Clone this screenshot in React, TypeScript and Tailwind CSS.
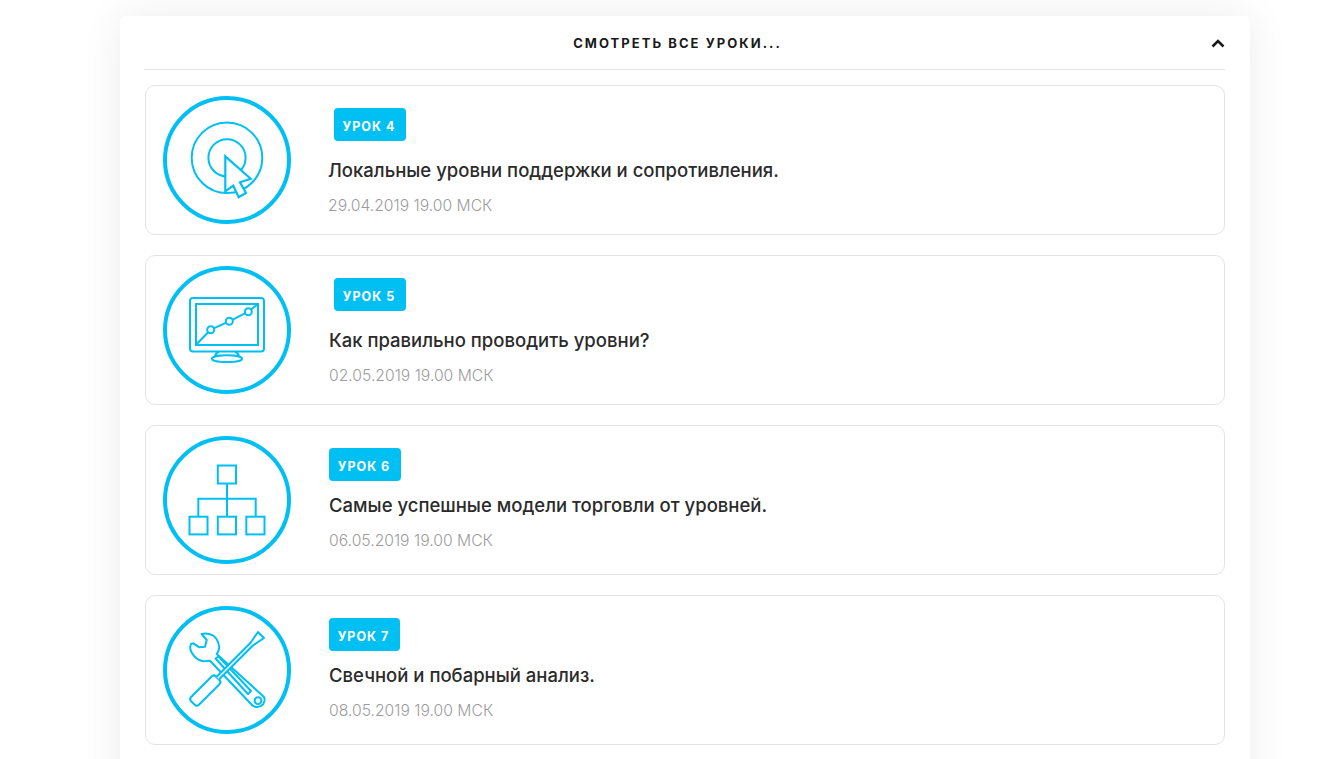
import type { ReactNode } from 'react'

const CY = '#00bff3'

function Ring({ children }: { children: ReactNode }) {
  return (
    <svg width="128" height="128" viewBox="0 0 128 128" fill="none" stroke={CY} strokeWidth="2" className="shrink-0">
      <circle cx="64" cy="64" r="62" strokeWidth="4" />
      {children}
    </svg>
  )
}

function TargetIcon() {
  return (
    <Ring>
      <circle cx="64" cy="61.8" r="35.3" />
      <circle cx="64" cy="61.8" r="18.6" />
      <path d="M62.3 60.3 L87.7 82.7 L77 86.3 L83 97 L75.7 101.3 L70.3 89.7 L62.3 95.3 Z" fill="#fff" strokeWidth="2.2" />
    </Ring>
  )
}

function MonitorIcon() {
  return (
    <Ring>
      <rect x="27" y="32" width="74" height="53.5" rx="3" />
      <rect x="33" y="38" width="62" height="41" />
      <path d="M33.7 78 L47.7 63.7 L66.3 55.3 L85.3 45.7 L95 38" />
      <circle cx="47.7" cy="63.7" r="3.5" fill="#fff" />
      <circle cx="66.3" cy="55.3" r="3.5" fill="#fff" />
      <circle cx="85.3" cy="45.7" r="3.5" fill="#fff" />
      <path d="M52 90 Q53 87 56 85.5 M76 90 Q75 87 72 85.5" />
      <ellipse cx="64" cy="92.7" rx="15" ry="3.4" />
    </Ring>
  )
}

function TreeIcon() {
  return (
    <Ring>
      <rect x="54.8" y="29.5" width="18.2" height="18" />
      <path d="M64 47.5 V80.7 M35.3 80.7 V62.7 H92.7 V80.7" />
      <rect x="26.5" y="80.7" width="18" height="17.7" />
      <rect x="54.8" y="80.7" width="18.2" height="17.7" />
      <rect x="83.3" y="80.7" width="18.2" height="17.7" />
    </Ring>
  )
}

function ToolsIcon() {
  return (
    <Ring>
      <path d="M38.7 28 L43.7 34 L42 40.7 L36.3 41.3 L30.3 37.3 L28 38 Q26 43 29 47 Q33 54 40.3 55.3 L47 54.7 L89.7 99.7 Q95 103 100 98.5 Q103 93 100.5 90.5 L53.7 48 Q57 43 56 39.7 Q55 33 50.3 29.7 Q44 26.5 38.7 28 Z" fill="#fff" strokeLinejoin="round" />
      <path d="M52.5 52.5 L55.5 50.5 L88 85 L85 88 Z" strokeLinejoin="round" />
      <circle cx="95" cy="94.7" r="3.4" />
      <g transform="rotate(-45 64 64)">
        <rect x="16.6" y="57.7" width="35" height="11" rx="3" fill="#fff" />
        <path d="M51.6 61.4 H100 L112.8 59 V67.5 L100 65 H51.6" fill="#fff" strokeLinejoin="round" />
      </g>
    </Ring>
  )
}

function LessonCard({ icon, lesson, title, date, badgeClass, titleClass, dateClass }: {
  icon: ReactNode
  lesson: string
  title: string
  date: string
  badgeClass: string
  titleClass: string
  dateClass: string
}) {
  return (
    <div className="flex h-[150px] rounded-[10px] border border-[#e3e3e3] bg-white pt-[10px] pl-[17px]">
      {icon}
      <div className="flex flex-col items-start">
        <div className={`mt-[12px] flex h-[33px] items-center justify-center rounded-[4px] bg-[#00bff3] pt-[6px] pr-[2px] pb-[1px] text-[12.5px] font-bold tracking-[1px] text-white ${badgeClass}`}>
          {lesson}
        </div>
        <div className={`text-[18.5px] leading-[24px] font-medium text-[#2b2b2b] ${titleClass}`}>{title}</div>
        <div className={`text-[15.7px] leading-[20px] font-light text-[#9c9c9c] ${dateClass}`}>{date}</div>
      </div>
    </div>
  )
}

export default function App() {
  return (
    <div className="h-screen overflow-hidden bg-white font-['Inter','Liberation_Sans',sans-serif]">
      <div className="mt-[16px] ml-[120px] h-[800px] w-[1130px] rounded-t-[6px] bg-white pr-[25px] pl-[24px] shadow-[0_0_40px_rgba(0,0,0,0.08)]">
        <div className="relative flex h-[54px] items-center justify-center border-b border-[#e3e3e3] pt-[2px] pr-[14px]">
          <span className="text-[13px] font-bold tracking-[2.05px] text-[#1a1a1a]">СМОТРЕТЬ ВСЕ УРОКИ...</span>
          <svg width="14" height="9" viewBox="0 0 14 9" fill="none" stroke="#1a1a1a" strokeWidth="2.6" className="absolute top-[23px] right-0">
            <path d="M1.5 7.5 L7 2 L12.5 7.5" />
          </svg>
        </div>
        <div className="mt-[15px] ml-[1px] flex flex-col gap-[20px]">
          <LessonCard icon={<TargetIcon />} lesson="УРОК 4" title="Локальные уровни поддержки и сопротивления." date="29.04.2019 19.00 МСК"
            badgeClass="ml-[43px] w-[72px]" titleClass="mt-[17px] ml-[37px]" dateClass="mt-[14px] ml-[37px]" />
          <LessonCard icon={<MonitorIcon />} lesson="УРОК 5" title="Как правильно проводить уровни?" date="02.05.2019 19.00 МСК"
            badgeClass="ml-[43px] w-[72px]" titleClass="mt-[17px] ml-[38px]" dateClass="mt-[14px] ml-[38px]" />
          <LessonCard icon={<TreeIcon />} lesson="УРОК 6" title="Самые успешные модели торговли от уровней." date="06.05.2019 19.00 МСК"
            badgeClass="ml-[38px] w-[72px]" titleClass="mt-[12px] ml-[38px]" dateClass="mt-[14px] ml-[38px]" />
          <LessonCard icon={<ToolsIcon />} lesson="УРОК 7" title="Свечной и побарный анализ." date="08.05.2019 19.00 МСК"
            badgeClass="ml-[38px] w-[71px]" titleClass="mt-[12px] ml-[38px]" dateClass="mt-[14px] ml-[38px]" />
        </div>
      </div>
    </div>
  )
}
